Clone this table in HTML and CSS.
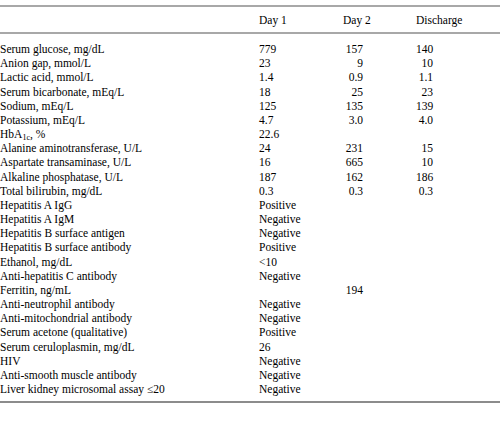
FILE: index.html
```html
<!DOCTYPE html>
<html>
<head>
<meta charset="utf-8">
<link rel="stylesheet" href="styles.css">
</head>
<body>
<table class="labs">
<thead>
<tr><th class="name"></th><th class="d1">Day 1</th><th class="d2">Day 2</th><th class="dc">Discharge</th></tr>
</thead>
<tbody>
<tr class="first"><td class="name">Serum glucose, mg/dL</td><td class="d1">779</td><td class="d2">157</td><td class="dc">140</td></tr>
<tr><td class="name">Anion gap, mmol/L</td><td class="d1">23</td><td class="d2">9</td><td class="dc">10</td></tr>
<tr><td class="name">Lactic acid, mmol/L</td><td class="d1">1.4</td><td class="d2">0.9</td><td class="dc">1.1</td></tr>
<tr><td class="name">Serum bicarbonate, mEq/L</td><td class="d1">18</td><td class="d2">25</td><td class="dc">23</td></tr>
<tr><td class="name">Sodium, mEq/L</td><td class="d1">125</td><td class="d2">135</td><td class="dc">139</td></tr>
<tr><td class="name">Potassium, mEq/L</td><td class="d1">4.7</td><td class="d2">3.0</td><td class="dc">4.0</td></tr>
<tr><td class="name">HbA<sub>1c</sub>, %</td><td class="d1">22.6</td><td class="d2"></td><td class="dc"></td></tr>
<tr><td class="name">Alanine aminotransferase, U/L</td><td class="d1">24</td><td class="d2">231</td><td class="dc">15</td></tr>
<tr><td class="name">Aspartate transaminase, U/L</td><td class="d1">16</td><td class="d2">665</td><td class="dc">10</td></tr>
<tr><td class="name">Alkaline phosphatase, U/L</td><td class="d1">187</td><td class="d2">162</td><td class="dc">186</td></tr>
<tr><td class="name">Total bilirubin, mg/dL</td><td class="d1">0.3</td><td class="d2">0.3</td><td class="dc">0.3</td></tr>
<tr><td class="name">Hepatitis A IgG</td><td class="d1">Positive</td><td class="d2"></td><td class="dc"></td></tr>
<tr><td class="name">Hepatitis A IgM</td><td class="d1">Negative</td><td class="d2"></td><td class="dc"></td></tr>
<tr><td class="name">Hepatitis B surface antigen</td><td class="d1">Negative</td><td class="d2"></td><td class="dc"></td></tr>
<tr><td class="name">Hepatitis B surface antibody</td><td class="d1">Positive</td><td class="d2"></td><td class="dc"></td></tr>
<tr><td class="name">Ethanol, mg/dL</td><td class="d1">&lt;10</td><td class="d2"></td><td class="dc"></td></tr>
<tr><td class="name">Anti-hepatitis C antibody</td><td class="d1">Negative</td><td class="d2"></td><td class="dc"></td></tr>
<tr><td class="name">Ferritin, ng/mL</td><td class="d1"></td><td class="d2">194</td><td class="dc"></td></tr>
<tr><td class="name">Anti-neutrophil antibody</td><td class="d1">Negative</td><td class="d2"></td><td class="dc"></td></tr>
<tr><td class="name">Anti-mitochondrial antibody</td><td class="d1">Negative</td><td class="d2"></td><td class="dc"></td></tr>
<tr><td class="name">Serum acetone (qualitative)</td><td class="d1">Positive</td><td class="d2"></td><td class="dc"></td></tr>
<tr><td class="name">Serum ceruloplasmin, mg/dL</td><td class="d1">26</td><td class="d2"></td><td class="dc"></td></tr>
<tr><td class="name">HIV</td><td class="d1">Negative</td><td class="d2"></td><td class="dc"></td></tr>
<tr><td class="name">Anti-smooth muscle antibody</td><td class="d1">Negative</td><td class="d2"></td><td class="dc"></td></tr>
<tr class="last"><td class="name">Liver kidney microsomal assay ≤20</td><td class="d1">Negative</td><td class="d2"></td><td class="dc"></td></tr>
</tbody>
</table>
</body>
</html>
```
FILE: styles.css
```css
html, body {
  margin: 0;
  padding: 0;
  background: #fff;
}
body {
  padding-top: 5px;
  font-family: "Liberation Serif", "Times New Roman", serif;
  font-size: 11.5px;
  color: #000;
}
.labs {
  width: 500px;
  border-collapse: collapse;
  table-layout: fixed;
}
.labs thead tr {
  border-top: 2px solid #a8a8a8;
  border-bottom: 2px solid #a8a8a8;
}
.labs th {
  font-weight: normal;
  text-align: left;
  height: 25px;
  padding: 0;
  vertical-align: middle;
}
.labs td {
  padding: 0;
  height: 14.17px;
  line-height: 14.17px;
  white-space: nowrap;
}
.labs tbody tr.first td { padding-top: 8px; }
.labs tbody tr.last td { padding-bottom: 5px; }
.labs tbody { border-bottom: 2px solid #8c8c8c; }
.name { width: 259px; }
th.d1 { width: 84px; }
th.d2 { width: 73px; }
td.d2 { text-align: right; padding-right: 53px !important; }
td.dc { text-align: right; padding-right: 67px !important; }
sub {
  font-size: 70%;
  line-height: 0;
  vertical-align: -2px;
}
```
